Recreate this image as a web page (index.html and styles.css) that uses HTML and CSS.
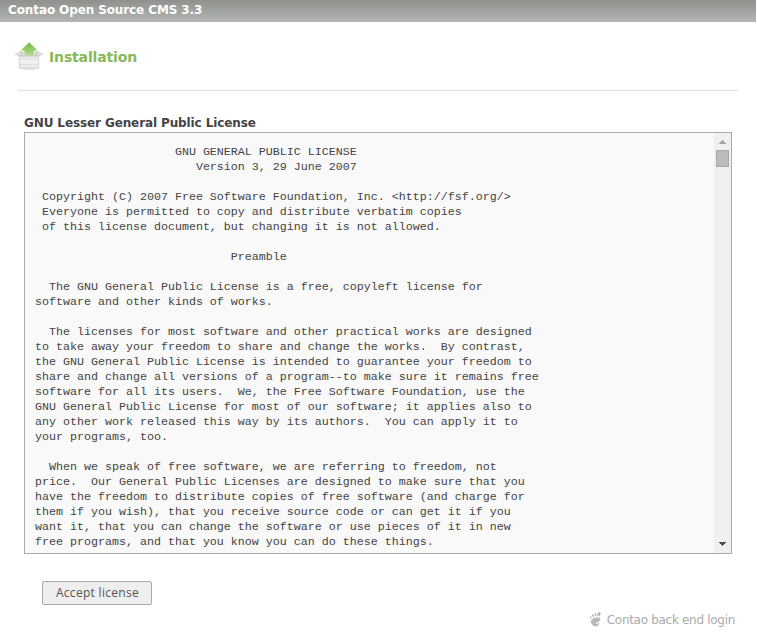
FILE: index.html
```html
<!DOCTYPE html>
<html lang="en">
<head>
<meta charset="utf-8">
<title>Contao Open Source CMS 3.3</title>
<link rel="stylesheet" href="styles.css">
</head>
<body>
<header class="topbar"><span>Contao Open Source CMS 3.3</span></header>
<main class="main">
<div class="heading">
<svg class="box-icon" width="30" height="30" viewBox="0 0 30 30">
<defs>
<linearGradient id="arrow" x1="0" y1="0" x2="0" y2="1"><stop offset="0" stop-color="#77b943"/><stop offset="1" stop-color="#b4dc86"/></linearGradient>
<linearGradient id="box" x1="0" y1="0" x2="0" y2="1"><stop offset="0" stop-color="#d2d2d2"/><stop offset=".3" stop-color="#f4f4f4"/><stop offset="1" stop-color="#e8e8e8"/></linearGradient>
</defs>
<path d="M8 27.500h14l-2 1.300H10z" fill="#dedede"/>
<path d="M6 10.500h18l2 4H4z" fill="#d2d2d2"/>
<path d="M15.200 1.300l8.300 8.200h-3.200v5.500H9.800V9.500H6.500z" fill="url(#arrow)"/>
<path d="M10 10v5M20.200 10v5" stroke="#f2f2f2"/>
<path d="M5.300 14.500h19.400v12.800H5.300z" fill="url(#box)" stroke="#c9c9c9" stroke-width=".7"/>
<path d="M6 10.500l2 4H4.500L1 13.500zM24 10.500l-2 4h3.500l3.500-1z" fill="#e6e6e6" stroke="#bfbfbf" stroke-width=".6"/>
<path d="M6 18.500h18M6 23.500h18" stroke="#d9d9d9" stroke-width=".7"/>
</svg>
<h1>Installation</h1>
</div>
<section class="license">
<h2><span>GNU Lesser General Public License</span></h2>
<div class="viewer">
<pre>
                    GNU GENERAL PUBLIC LICENSE
                       Version 3, 29 June 2007

 Copyright (C) 2007 Free Software Foundation, Inc. &lt;http://fsf.org/&gt;
 Everyone is permitted to copy and distribute verbatim copies
 of this license document, but changing it is not allowed.

                            Preamble

  The GNU General Public License is a free, copyleft license for
software and other kinds of works.

  The licenses for most software and other practical works are designed
to take away your freedom to share and change the works.  By contrast,
the GNU General Public License is intended to guarantee your freedom to
share and change all versions of a program--to make sure it remains free
software for all its users.  We, the Free Software Foundation, use the
GNU General Public License for most of our software; it applies also to
any other work released this way by its authors.  You can apply it to
your programs, too.

  When we speak of free software, we are referring to freedom, not
price.  Our General Public Licenses are designed to make sure that you
have the freedom to distribute copies of free software (and charge for
them if you wish), that you receive source code or can get it if you
want it, that you can change the software or use pieces of it in new
free programs, and that you know you can do these things.</pre>
<div class="scrollbar">
<svg width="7" height="4" viewBox="0 0 7 4" shape-rendering="crispEdges"><path d="M3 0h1v1h1v1h1v1h1v1H0V3h1V2h1V1h1z" fill="#a3a3a3"/></svg>
<div class="thumb"></div>
<svg class="down" width="7" height="4" viewBox="0 0 7 4" shape-rendering="crispEdges"><path d="M0 0h7v1H6v1H5v1H4v1H3V3H2V2H1V1H0z" fill="#505050"/></svg>
</div>
</div>
<button class="accept"><span>Accept license</span></button>
</section>
</main>
<footer class="footer">
<svg width="12" height="15" viewBox="0 0 12 15" fill="#b9b9b9"><ellipse cx="10" cy="2.200" rx="1.500" ry="2.200" transform="rotate(18 10 2.200)"/><ellipse cx="6.600" cy="2.500" rx="1" ry="1.500"/><ellipse cx="4" cy="3.700" rx=".9" ry="1.400" transform="rotate(-15 4 3.700)"/><ellipse cx="1.700" cy="5.400" rx=".8" ry="1.200" transform="rotate(-25 1.700 5.400)"/><path d="M10.500 6C7 4.500 2 6.500 2 9.300c0 2.700 2 5.200 4.800 5.200 2 0 3.500-1.500 3.200-3.300-.2-1-1.200-.8-1.500 0-.3 1-1.500 1.200-1.700.3-.2-1.300 4.500-1.600 4.500-4.300 0-.6-.2-1-.8-1.200z"/></svg>
<a>Contao back end login</a>
</footer>
</body>
</html>
```
FILE: styles.css
```css
body {
  margin: 0;
  background: #fff;
  color: #444;
  font-family: "DejaVu Sans", sans-serif;
}
.topbar {
  width: 756px;
  height: 22px;
  box-sizing: border-box;
  padding-left: 8px;
  background: linear-gradient(#8f918d, #b3b6b2);
  color: #fff;
  font: bold 12px/20px "DejaVu Sans", sans-serif;
  letter-spacing: -0.11px;
}
.main {
  padding: 19px 19px 0 18px;
}
.heading {
  display: flex;
  height: 49px;
  border-bottom: 1px solid #ddd;
}
.box-icon {
  margin-left: -4px;
  flex: none;
}
h1 {
  margin: 6px 0 0 5px;
  color: #8ab858;
  font-size: 14px;
  line-height: 20px;
  letter-spacing: -0.15px;
}
.license {
  margin: 22px 6px 0;
}
h2 {
  margin: 0;
  height: 19px;
  font-size: 12px;
  line-height: 20px;
  letter-spacing: -0.11px;
}
.viewer {
  display: flex;
  height: 420px;
  border: 1px solid #aaa;
  background: #f9f9f9;
}
pre {
  flex: 1;
  margin: 0;
  padding: 12px 0 0 10px;
  font: 11.667px/15px "Liberation Mono", monospace;
}
.scrollbar {
  display: flex;
  flex-direction: column;
  align-items: center;
  width: 17px;
  padding: 7px 0;
  box-sizing: border-box;
  background: #f0f0f0;
}
.thumb {
  width: 11px;
  height: 15px;
  margin-top: 6px;
  border: 1px solid #a8a8a8;
  background: #bcbcbc;
}
.down {
  margin-top: auto;
}
.accept {
  display: block;
  width: 110px;
  height: 24px;
  margin: 27px 0 0 18px;
  padding: 0 0 0 1px;
  border: 1px solid #aaa;
  border-radius: 2px;
  background: #eee;
  color: #555;
  font: 12px/20px "Open Sans", sans-serif;
  letter-spacing: 0.3px;
}
.footer {
  display: flex;
  justify-content: flex-end;
  gap: 6px;
  margin: 7px 22px 0 0;
  color: #aaa;
  font-size: 12px;
  line-height: 16px;
  letter-spacing: -0.3px;
}
```
